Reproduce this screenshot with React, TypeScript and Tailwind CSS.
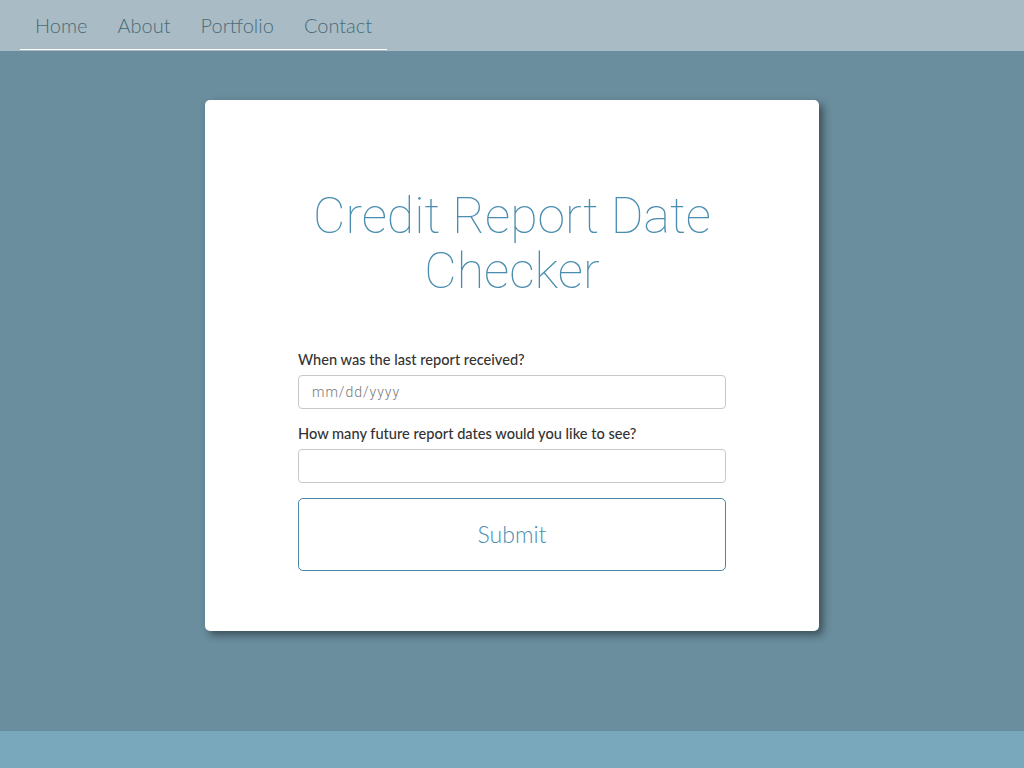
import { useState } from 'react';

const NAV_ITEMS = ['Home', 'About', 'Portfolio', 'Contact'];

const LABEL_STYLE = "block text-[14.6px] leading-[18px] font-medium text-[#333] mb-[6px] font-['Lato',sans-serif]";
const INPUT_STYLE = "w-full h-[34px] border border-[#c8c8c8] rounded-[4px] px-[13px] text-[14px] text-[#555] outline-none font-['Roboto',sans-serif] placeholder:text-[#777] placeholder:font-light placeholder:tracking-[1px]";

export default function App() {
  const [lastDate, setLastDate] = useState('');
  const [count, setCount] = useState('');

  return (
    <div className="min-h-[768px] flex flex-col bg-[#6a8e9e] font-['Lato',sans-serif]">
      {/* Nav */}
      <nav className="h-[51px] bg-[#a9bcc5] px-[20px]">
        <ul className="inline-flex h-[50px] border-b border-white">
          {NAV_ITEMS.map(item => (
            <li key={item}>
              <a href="#" className="block px-[15px] leading-[50px] text-[20px] font-light text-[#4a6b7a]">
                {item}
              </a>
            </li>
          ))}
        </ul>
      </nav>

      {/* Main */}
      <main className="flex-1 flex justify-center pt-[49px] pb-[100px]">
        <div className="w-[614px] h-[531px] bg-white rounded-[5px] shadow-[4px_4px_8px_rgba(0,0,0,0.45)] flex flex-col items-center pt-[89px]">
          <h1 className="w-[460px] text-center text-[50px] leading-[55px] font-thin text-[#4a8db0] font-['Roboto',sans-serif]">
            Credit Report Date Checker
          </h1>

          <form className="w-[428px] mt-[52px]" onSubmit={e => e.preventDefault()}>
            <label className={LABEL_STYLE}>When was the last report received?</label>
            <input
              type="text"
              placeholder="mm/dd/yyyy"
              value={lastDate}
              onChange={e => setLastDate(e.target.value)}
              className={INPUT_STYLE}
            />

            <label className={`${LABEL_STYLE} mt-[16px]`}>How many future report dates would you like to see?</label>
            <input
              type="text"
              value={count}
              onChange={e => setCount(e.target.value)}
              className={INPUT_STYLE}
            />

            <button
              type="submit"
              className="mt-[15px] w-full h-[73px] border border-[#4a87a7] rounded-[5px] text-[23px] font-light text-[#4a8db0] bg-white cursor-pointer"
            >
              Submit
            </button>
          </form>
        </div>
      </main>

      {/* Footer */}
      <footer className="h-[37px] bg-[#79a7bb]" />
    </div>
  );
}
